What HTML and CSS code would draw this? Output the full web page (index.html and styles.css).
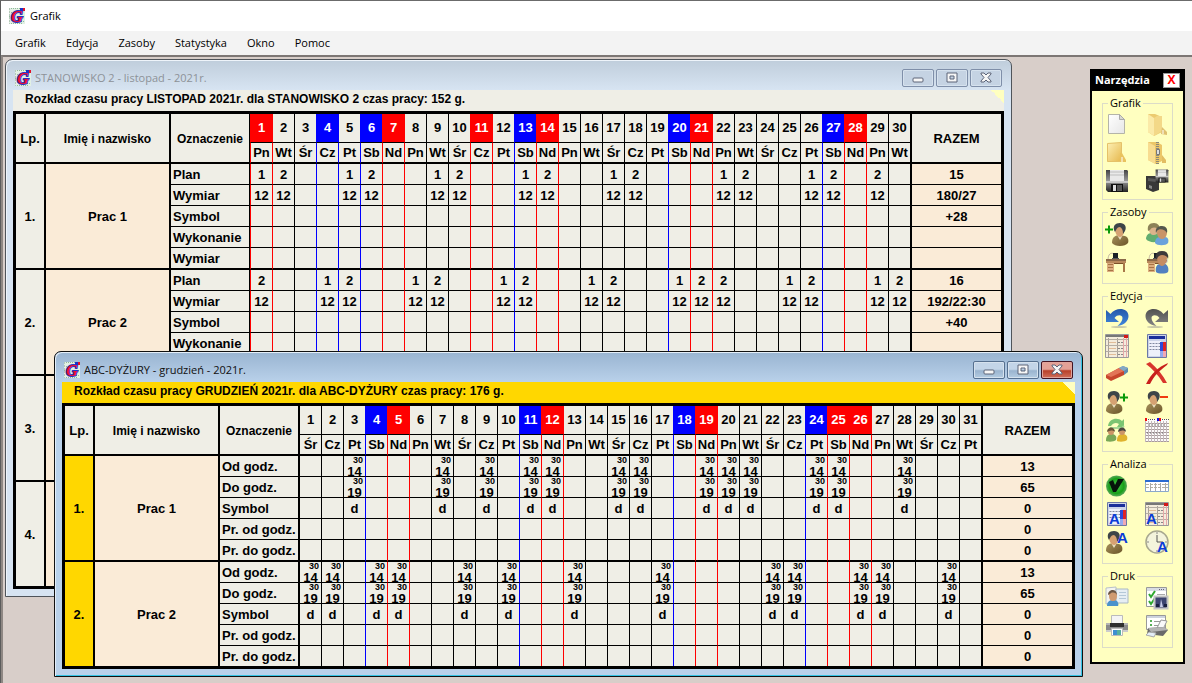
FILE: index.html
```html
<!DOCTYPE html>
<html lang="pl">
<head>
<meta charset="utf-8">
<title>Grafik</title>
<link rel="stylesheet" href="styles.css">
</head>
<body>
<svg class="defs" aria-hidden="true">
  <defs>
    <linearGradient id="gFolder" x1="0" y1="0" x2="1" y2="1"><stop offset="0" stop-color="#fdf0b4"/><stop offset="1" stop-color="#e6b84e"/></linearGradient>
    <linearGradient id="gPaper" x1="0" y1="0" x2="1" y2="1"><stop offset="0" stop-color="#ffffff"/><stop offset="1" stop-color="#e6e6e6"/></linearGradient>
    <linearGradient id="gMetal" x1="0" y1="0" x2="0" y2="1"><stop offset="0" stop-color="#444"/><stop offset=".5" stop-color="#999"/><stop offset="1" stop-color="#222"/></linearGradient>
    <linearGradient id="gBlue" x1="0" y1="0" x2="0" y2="1"><stop offset="0" stop-color="#2456a8"/><stop offset="1" stop-color="#4288dc"/></linearGradient>
    <linearGradient id="gGrey" x1="0" y1="0" x2="0" y2="1"><stop offset="0" stop-color="#505050"/><stop offset="1" stop-color="#858585"/></linearGradient>
    <linearGradient id="gSuit" x1="0" y1="0" x2="1" y2="1"><stop offset="0" stop-color="#a8925c"/><stop offset="1" stop-color="#6a5428"/></linearGradient>
    <radialGradient id="gOk"><stop offset="0" stop-color="#4fd04f"/><stop offset=".7" stop-color="#18a018"/><stop offset="1" stop-color="#5aa85a"/></radialGradient>
  </defs>
  <symbol id="logo" viewBox="0 0 16 16">
    <rect width="16" height="16" fill="#e2f0e4"/>
    <path d="M0 .5h12M0 4.500h4M0 8.500h4M0 12.500h4M12 13.500h4M2 15.500h12M14 8.500h2" stroke="#8fb89a" stroke-dasharray="1 1"/>
    <path d="M0.500 0v16" stroke="#b5c8b8" stroke-dasharray="2 1"/>
    <text x="2" y="14" class="logo-letter">G</text>
    <path d="M11 0h3v3h-3z" fill="#1733c8"/><path d="M14 0h2v3h-2z" fill="#e0102a"/>
  </symbol>
  <symbol id="man" viewBox="0 0 18 24">
    <path d="M1 21c0-5 2-7 6-8l7 1c3 1 4 4 3 7-3 4-13 4-16 0z" fill="url(#gSuit)"/>
    <path d="M6 13l3 5 3-5z" fill="#e8dcbc"/>
    <path d="M4 7c0 4 2 8 5 8s4-4 4-8-9-5-9 0z" fill="#d6a272"/>
    <path d="M3 8c-1-4 1-7 6-7 5 0 7 4 5 8l-2 3c0-4-1-6-3-7-2 0-3 1-4 3l-1 2z" fill="#3d4448"/>
  </symbol>
  <symbol id="duo" viewBox="0 0 24 24">
    <path d="M1 17c0-4 3-6 5-6h6c2 0 3 5 3 7-3 3-11 3-14-1z" fill="#62ae70"/>
    <path d="M4 7c0 4 2 6 5 6s4-3 4-6-9-4-9 0z" fill="#dcb48c"/>
    <path d="M3 9C2 4 4 1 9 1c4 0 6 3 6 7l-2-1c-3-2-6-2-8 1z" fill="#8d8258"/>
    <path d="M10 21c0-4 2-6 5-6h5c3 0 4 3 3 6-2 3-11 3-13 0z" fill="#6aa2dc"/>
    <path d="M12 10c0 4 2 7 5 7s5-3 5-7-10-5-10 0z" fill="#c99468"/>
    <path d="M11 11c-1-5 2-7 6-7s6 3 5 7c-2-4-8-5-10-2z" fill="#55584e"/>
  </symbol>
  <symbol id="desk" viewBox="0 0 24 24">
    <path d="M3 10c0-6 3-8 6-6" fill="none" stroke="#c4b8a0"/>
    <path d="M8 3h5v5H8z" fill="#1a2026"/><path d="M7 8h7v1H7z" fill="#555"/>
    <path d="M1 10h20v3H1z" fill="#b98a5c"/><path d="M1 9h20v2H1z" fill="#8a6848"/>
    <path d="M2 13h7v9H2z" fill="#dcae80"/><path d="M3 14.500h5M3 17.500h5M3 20.500h5" stroke="#a87444"/>
    <path d="M18 13h2v9h-2z" fill="#a87848"/><path d="M9 13h9v1H9z" fill="#7c5028"/>
  </symbol>
  <symbol id="undo" viewBox="0 0 24 24">
    <ellipse cx="14" cy="21" rx="8" ry="1" fill="#c9c9a8"/>
    <path d="M1 4v12h13l-4.500-4c3-4 8-3 8 0 0 3-2 5-5 8 7-1 11-5 11-10 0-8-12-10-18-2z"/>
  </symbol>
  <symbol id="sheet" viewBox="0 0 24 24">
    <path d="M.5.5h23v23H.5z" fill="#f4ecdc" stroke="#999"/>
    <path d="M1 1h18v2H1z" fill="#777"/><path d="M19 1h4v3h-4z" fill="#d41818"/>
    <path d="M12.500 4v19M3.500 4v19" stroke="#a8a098"/>
    <path d="M1 5.500h22M1 11.500h22M1 17.500h22" stroke="#b5aea4"/>
    <path d="M13 8.500h5M13 14.500h5M13 20.500h5" stroke="#888" stroke-dasharray="2 1"/>
    <path d="M4 8.500h7M4 14.500h7M4 20.500h7" stroke="#e2bd98"/>
    <path d="M18.500 4v19M21.500 4v19" stroke="#e6a8a8"/>
  </symbol>
  <symbol id="month" viewBox="0 0 24 24">
    <path d="M2.500.5h19v23h-19z" fill="#ccd4e8" stroke="#6c78a4"/>
    <path d="M4 2h16v3H4z" fill="#1a2f9a"/>
    <path d="M4 7h12v15H4z" fill="#eef0fa"/>
    <path d="M4.500 9.500h11M4.500 12.500h11M4.500 15.500h11" stroke="#8088a0" stroke-dasharray="2 1"/>
    <path d="M15 8h3v9h-3z" fill="#2d49d8"/><path d="M18 8h3v9h-3z" fill="#e02424"/>
    <path d="M15 17h3v6h-3z" fill="#94aaf0"/><path d="M18 17h3v6h-3z" fill="#f0a8b4"/>
  </symbol>
  <symbol id="floppy" viewBox="0 0 24 24">
    <path d="M1 1h21l1 1v21H3l-2-2z" fill="url(#gMetal)"/><path d="M5 1h14v11H5z" fill="#e9e9e9"/>
    <path d="M5 3h14M5 6h14" stroke="#bdbdbd"/><path d="M1 12h22v2H1z" fill="#eee" opacity=".6"/>
    <path d="M6 15h12v8H6z" fill="#111"/><path d="M8 16h3v6H8z" fill="#ddd"/><path d="M12 16h5v6h-5z" fill="#555"/>
  </symbol>
</svg>

<div class="app">
  <header class="app-title">
    <svg class="logo" aria-hidden="true"><use href="#logo"/></svg>
    <span>Grafik</span>
  </header>
  <nav class="menu">
    <button type="button">Grafik</button>
    <button type="button">Edycja</button>
    <button type="button">Zasoby</button>
    <button type="button">Statystyka</button>
    <button type="button">Okno</button>
    <button type="button">Pomoc</button>
  </nav>

  <main class="workspace">
    <section class="window window-november">
      <div class="window-bar">
        <svg class="logo" aria-hidden="true"><use href="#logo"/></svg>
        <span class="window-name">STANOWISKO 2 - listopad - 2021r.</span>
        <div class="window-buttons">
          <button type="button" aria-label="Minimalizuj"><svg viewBox="0 0 12 12"><rect x="1" y="6" width="10" height="4" rx="1"/></svg></button>
          <button type="button" aria-label="Maksymalizuj"><svg viewBox="0 0 12 12"><path fill-rule="evenodd" d="M1 1h10v9H1zM4 4v3h4V4z"/></svg></button>
          <button type="button" aria-label="Zamknij"><svg viewBox="0 0 12 12"><path d="M1 1h3l2 2 2-2h3v1L8 5.500 11 9v1H8L6 8l-2 2H1V9l3-3.500L1 2z"/></svg></button>
        </div>
      </div>
      <h2 class="caption">Rozkład czasu pracy LISTOPAD 2021r. dla STANOWISKO 2 czas pracy: 152 g.</h2>
      <table class="schedule" id="november"></table>
    </section>

    <section class="window window-december active">
      <div class="window-bar">
        <svg class="logo" aria-hidden="true"><use href="#logo"/></svg>
        <span class="window-name">ABC-DYŻURY - grudzień - 2021r.</span>
        <div class="window-buttons">
          <button type="button" aria-label="Minimalizuj"><svg viewBox="0 0 12 12"><rect x="1" y="6" width="10" height="4" rx="1"/></svg></button>
          <button type="button" aria-label="Maksymalizuj"><svg viewBox="0 0 12 12"><path fill-rule="evenodd" d="M1 1h10v9H1zM4 4v3h4V4z"/></svg></button>
          <button type="button" class="close" aria-label="Zamknij"><svg viewBox="0 0 12 12"><path d="M1 1h3l2 2 2-2h3v1L8 5.500 11 9v1H8L6 8l-2 2H1V9l3-3.500L1 2z"/></svg></button>
        </div>
      </div>
      <h2 class="caption">Rozkład czasu pracy GRUDZIEŃ 2021r. dla ABC-DYŻURY czas pracy: 176 g.</h2>
      <table class="schedule" id="december"></table>
    </section>

    <aside class="toolbox">
      <div class="toolbox-bar">
        <span>Narzędzia</span>
        <button type="button" aria-label="Zamknij narzędzia">X</button>
      </div>
      <div class="toolbox-body">
        <fieldset class="compact">
          <legend>Grafik</legend>
          <button type="button" aria-label="Nowy"><svg viewBox="0 0 24 24"><path d="M3.500 1.500h11l5 5v14h-16z" fill="url(#gPaper)" stroke="#b4b4a8"/><path d="M14.500 1.500v5h5z" fill="#d8d8d0" stroke="#aaa"/></svg></button>
          <button type="button" aria-label="Otwórz"><svg viewBox="0 0 24 24"><path d="M3 1h7l7 3v15l-8 4-6-4z" fill="#eccb70"/><path d="M3 1l6 4v18l-6-4z" fill="#fbeaa8"/><path d="M9 5l3-2h5v15l-8 5z" fill="#f3d888"/><path d="M17 14l5 5v3l-6-1z" fill="#dfc070"/><path d="M18 17v4" stroke="#fff"/></svg></button>
          <button type="button" aria-label="Zamknij grafik"><svg viewBox="0 0 24 24"><path d="M2.500 2.500l14-1v19h-14z" fill="url(#gFolder)" stroke="#e5c169"/><path d="M15 12h2l4 7v2h-6z" fill="#e9c25e"/><path d="M17 16v5" stroke="#fff"/></svg></button>
          <button type="button" aria-label="Archiwum"><svg viewBox="0 0 24 24"><path d="M3 1h9l5 3v16l-6 3-8-4z" fill="#ecc668"/><path d="M3 1l7 4v18l-7-4z" fill="#f8dc90"/><path d="M12.500 1v7M12.500 14v9" stroke="#8c8878" stroke-width="3" stroke-dasharray="1 1"/><path d="M11.500 8.500h3v5h-3z" fill="#ddd" stroke="#777"/><path d="M17 14l4 5v3h-4z" fill="#e2bd62"/></svg></button>
          <button type="button" aria-label="Zapisz"><svg viewBox="0 0 24 24"><use href="#floppy"/></svg></button>
          <button type="button" aria-label="Zapisz jako"><svg viewBox="0 0 24 24"><path d="M1 7h10l3 3v11l-6 2-7-3z" fill="#383838"/><path d="M3 9l8 1v3l-8-1z" fill="#5a5a5a"/><path d="M4 16l3 1v3l-3-1z" fill="#888"/><use href="#floppy" x="10" y="0" width="14" height="14"/></svg></button>
        </fieldset>
        <fieldset>
          <legend>Zasoby</legend>
          <button type="button" aria-label="Dodaj pracownika"><svg viewBox="0 0 24 24"><use href="#man" x="6" y="0" width="18" height="24"/><path d="M0 7.500h8M4 3.500v8" stroke="#0a9a0a" stroke-width="2"/></svg></button>
          <button type="button" aria-label="Pracownicy"><svg viewBox="0 0 24 24"><use href="#duo"/></svg></button>
          <button type="button" aria-label="Stanowisko"><svg viewBox="0 0 24 24"><use href="#desk"/></svg></button>
          <button type="button" aria-label="Obsada stanowiska"><svg viewBox="0 0 24 24"><use href="#desk" x="1"/><path d="M11 22c-1-5 1-8 4-8h5c3 1 4 5 3 8-2 2-10 2-12 0z" fill="#5280c0"/><path d="M12 7c0 5 2 9 5 9s5-4 5-9-10-5-10 0z" fill="#c48c62"/><path d="M11 9c-1-5 1-8 6-8s7 3 6 8c-1-3-3-4-6-4-2 0-4 1-5 4z" fill="#3d3a3a"/><path d="M22 9c1 2 0 4-2 5" fill="none" stroke="#ccc"/></svg></button>
        </fieldset>
        <fieldset>
          <legend>Edycja</legend>
          <button type="button" aria-label="Cofnij"><svg viewBox="0 0 24 24" fill="url(#gBlue)"><use href="#undo"/></svg></button>
          <button type="button" aria-label="Ponów"><svg viewBox="0 0 24 24" fill="url(#gGrey)"><g transform="matrix(-1 0 0 1 24 0)"><use href="#undo"/></g></svg></button>
          <button type="button" aria-label="Arkusz"><svg viewBox="0 0 24 24"><use href="#sheet"/></svg></button>
          <button type="button" aria-label="Miesiąc"><svg viewBox="0 0 24 24"><use href="#month"/></svg></button>
          <button type="button" aria-label="Wyczyść"><svg viewBox="0 0 24 24"><path d="M1 13l13-7 5 3v4L6 19l-5-3z" fill="#c8452c"/><path d="M1 13l13-7 5 3-13 6z" fill="#e27458"/><path d="M14 6l4-2 5 2v4l-4 3V9z" fill="#5f8cb0"/><path d="M14 6l4-2 5 2-4 3z" fill="#84a8c4"/></svg></button>
          <button type="button" aria-label="Usuń"><svg viewBox="0 0 24 24"><path d="M1 2l4-2c7 6 13 13 17 21h-4C13 13 8 7 1 2z" fill="#d8352c"/><path d="M23 1l-1 2C14 9 9 14 5 22H1C6 12 13 5 23 1z" fill="#c8201c"/></svg></button>
          <button type="button" aria-label="Dodaj osobę"><svg viewBox="0 0 24 24"><use href="#man" x="0" y="0" width="18" height="24"/><path d="M15 7.500h8M19 3.500v8" stroke="#0a9a0a" stroke-width="2"/></svg></button>
          <button type="button" aria-label="Usuń osobę"><svg viewBox="0 0 24 24"><use href="#man" x="0" y="0" width="18" height="24"/><path d="M15 7h8" stroke="#f03a10" stroke-width="2"/></svg></button>
          <button type="button" aria-label="Zamień osoby"><svg viewBox="0 0 24 24"><path d="M3 8c1-8 10-9 14-5l2-2v8h-7l2-3c-3-2-6-1-8 2z" fill="#7cc472"/><path d="M5 10h12l2-2" fill="none" stroke="#a7d896" stroke-width="2"/><path d="M1 23c0-4 1-6 4-7h3c3 1 4 3 3 6-2 2-8 2-10 1z" fill="#7aa858"/><circle cx="6" cy="14" r="3" fill="#cc9566"/><path d="M2 14c0-6 8-6 8 0-2-2-5-2-8 0z" fill="#6a5438"/><path d="M12 23c0-4 1-6 4-7h3c3 1 4 3 3 6-2 2-8 2-10 1z" fill="#e0b32d"/><circle cx="17" cy="14" r="3" fill="#cc9566"/><path d="M13 14c0-6 8-6 8 0-2-2-5-2-8 0z" fill="#4c4640"/></svg></button>
          <button type="button" aria-label="Siatka"><svg viewBox="0 0 24 24"><path d="M0 1h24v23H0z" fill="#fcfafa"/><path d="M0 5.500h24M0 8.500h24M0 11.500h24M0 14.500h24M0 17.500h24M0 20.500h24M0 23.500h24" stroke="#a89c9c"/><path d="M.5 3v21M3.500 3v21M6.500 3v21M9.500 3v21M12.500 3v21M15.500 3v21M18.500 3v21M21.500 3v21" stroke="#c4b8bc"/><path d="M4 7h16M2 15h18" stroke="#666" stroke-dasharray="1 2"/><path d="M0 0h2v3H0zM14 0h2v3h-2z" fill="#e11"/><path d="M12 0h2v3h-2z" fill="#11e"/><path d="M3 1.500h8M17 1.500h7" stroke="#555" stroke-dasharray="1 1"/></svg></button>
        </fieldset>
        <fieldset>
          <legend>Analiza</legend>
          <button type="button" aria-label="Sprawdź"><svg viewBox="0 0 24 24"><circle cx="11.500" cy="12" r="10.500" fill="url(#gOk)"/><path d="M4 8l4-2 2 5 3-6h6l-8 13H8z" fill="#06140a"/></svg></button>
          <button type="button" aria-label="Tabela"><svg viewBox="0 0 24 24"><path d="M.5 6.500h23v11H.5z" fill="#fff" stroke="#8aa8cc"/><path d="M0 6h24v2H0z" fill="#2a6ad0"/><path d="M1 10.500h22M1 13.500h22" stroke="#b4b0a0" stroke-dasharray="3 1"/><path d="M5.500 9v8M10.500 9v8M15.500 9v8M20.500 9v8" stroke="#aaa"/></svg></button>
          <button type="button" aria-label="Analiza miesiąca"><svg viewBox="0 0 24 24"><use href="#month"/><text x="4" y="22" class="glyph-a">A</text></svg></button>
          <button type="button" aria-label="Analiza arkusza"><svg viewBox="0 0 24 24"><use href="#sheet"/><text x="1" y="22" class="glyph-a">A</text></svg></button>
          <button type="button" aria-label="Analiza osoby"><svg viewBox="0 0 24 24"><use href="#man" x="0" y="0" width="18" height="24"/><text x="12" y="13" class="glyph-a">A</text></svg></button>
          <button type="button" aria-label="Analiza czasu"><svg viewBox="0 0 24 24"><circle cx="12" cy="12" r="11" fill="#f4f4dc" stroke="#a8a890" stroke-width="1.500"/><path d="M12 5v7h6" fill="none" stroke="#555"/><path d="M12 2v2M12 20v2M2 12h2M20 12h2" stroke="#888"/><text x="12" y="22" class="glyph-a">A</text></svg></button>
        </fieldset>
        <fieldset>
          <legend>Druk</legend>
          <button type="button" aria-label="Drukuj kartę"><svg viewBox="0 0 24 24"><path d="M1 2l10-1v15L1 18z" fill="#f4f4f0" stroke="#b8c0c8"/><path d="M11 3h12v14H11z" fill="#e6eef4" stroke="#aab8c4"/><path d="M14 6.500h7M14 9.500h7M14 12.500h7" stroke="#b4c8d8"/><path d="M2 20c0-4 2-5 4-6h4c3 1 4 4 3 6z" fill="#4a92cc"/><path d="M4 9c0 4 1 6 4 6s4-2 4-6-8-4-8 0z" fill="#cf9a70"/><path d="M3 9c0-6 9-7 9 0-2-3-5-3-7-1z" fill="#6c5644"/></svg></button>
          <button type="button" aria-label="Drukuj listę"><svg viewBox="0 0 24 24"><path d="M1.500 1.500h20v19h-20z" fill="#fff" stroke="#999"/><path d="M2 2h19v3H2z" fill="#d8dce4"/><path d="M14 3.500h6" stroke="#667" stroke-dasharray="1 1"/><path d="M4 8l2 3 4-6M4 15l2 3 4-6" fill="none" stroke="#2fa82f" stroke-width="2"/><path d="M12 8.500h8" stroke="#aaa"/><path d="M9.500 10.500h13v12h-13z" fill="#3c4470" stroke="#c4c4c4" stroke-width="2"/><path d="M11 18h3v3h-3zM19 18h3v3h-3z" fill="#1a2040"/><path d="M15 21l1-8 2 8z" fill="#c8cce8"/></svg></button>
          <button type="button" aria-label="Drukuj"><svg viewBox="0 0 24 24"><path d="M6.500 1.500h11v8h-11z" fill="#f4f4f4" stroke="#bbb"/><path d="M1 9h22v9H1z" fill="#8a8a8a"/><path d="M1 9h22v2H1z" fill="#b4b4b4"/><path d="M5 9h14v4H5z" fill="#2e2e2e"/><path d="M1 16h22v2H1z" fill="#ccc"/><path d="M6.500 14.500h11v7h-11z" fill="#fff" stroke="#bbb"/><path d="M8 16h4v5H8z" fill="#3d8fd0"/><path d="M12 16h4v5h-4z" fill="#55b0a0"/></svg></button>
          <button type="button" aria-label="Drukuj zestawienie"><svg viewBox="0 0 24 24"><path d="M1.500 1.500h19v14h-19z" fill="#fff" stroke="#999"/><path d="M2 2h18v2H2z" fill="#cdd3dd"/><path d="M5 6h2v2H5zM5 10h2v2H5z" fill="#58b058"/><path d="M9 7.500h7M9 11.500h4" stroke="#999"/><path d="M16 6l6 1-4 8-6-1z" fill="#fafafa" stroke="#999"/><path d="M3 14l16-1 4 3-5 6-16-2z" fill="#6a6a6a"/><path d="M3 14l16-1 4 3-17 2z" fill="#b4b4b4"/><path d="M4 18l7 1-2 4-8-2z" fill="#e4eef8" stroke="#aaa"/></svg></button>
        </fieldset>
      </div>
    </aside>
  </main>
</div>
<script src="schedule.js"></script>
</body>
</html>
```

FILE: styles.css
```css
* { box-sizing: border-box; }

body {
  margin: 0;
  font: 11px/16px "Open Sans", "Noto Sans", sans-serif;
  color: #000;
  background: #d8cec9;
}

button { font: inherit; color: inherit; margin: 0; padding: 0; border: 0; background: none; }

.defs { position: absolute; width: 0; height: 0; }

.logo { width: 16px; height: 16px; flex: none; }

.logo-letter {
  font: italic bold 16px "Liberation Serif", serif;
  fill: #ee1030;
  stroke: #2a34c4;
  stroke-width: 2px;
  paint-order: stroke;
}

.glyph-a { font: bold 15px "Liberation Sans", sans-serif; fill: #0a3cd8; }

.app {
  display: flex;
  flex-direction: column;
  min-height: 100vh;
  border-top: 1px solid #6b6b6b;
  border-left: 1px solid #5c5c5c;
}

.app-title {
  display: flex;
  align-items: center;
  gap: 5px;
  height: 30px;
  padding-left: 8px;
  background: #fff;
}

.menu {
  display: flex;
  gap: 20px;
  height: 24px;
  padding-left: 14px;
  background: #f3f3f3;
}

.workspace {
  position: relative;
  flex: 1;
  overflow: hidden;
  border-top: 2px solid #7c7674;
  border-left: 2px solid #8e8783;
  background: #d8cec9;
}

/* Document windows */

.window {
  position: absolute;
  padding: 0 7px 7px;
  border: 1px solid #4f545a;
  border-radius: 7px 7px 0 0;
  background: #d7e4f2 linear-gradient(#bfcddb, #d7e4f2) 0 0 / 100% 30px no-repeat;
  box-shadow: inset 1px 1px #eef4fa;
}

.window-november { left: 2px; top: 2px; }
.window-december { left: 51px; top: 294px; }

.window.active {
  border-color: #111;
  background: #b9d1ea linear-gradient(#99b4d1, #b9d1ea) 0 0 / 100% 30px no-repeat;
  box-shadow: inset 1px 1px #e4eef8, inset -1px -1px #35c4e4;
}

.window-bar {
  display: flex;
  align-items: center;
  gap: 4px;
  height: 30px;
  padding: 6px 2px 0;
  color: #8d9298;
}

.active .window-bar { color: #101010; }

.window-buttons { display: flex; gap: 2px; margin-left: auto; }

.window-buttons button {
  display: flex;
  align-items: center;
  justify-content: center;
  width: 32px;
  height: 18px;
  border: 1px solid #7f8fa9;
  border-radius: 2px;
  background: #c5d3e3;
  box-shadow: inset 0 0 0 1px #d6e2ee;
}

.active .window-buttons button {
  border-color: #56708f;
  background: linear-gradient(#c3d5e8 45%, #9ab4cf 55%, #b4cce2);
}

.active .window-buttons .close {
  border-color: #431422;
  background: linear-gradient(#e3a196 45%, #b8402a 55%, #d0705c);
  box-shadow: inset 0 0 0 1px #e0a49c;
}

.window-buttons svg { width: 12px; height: 12px; fill: #f6f6f6; stroke: #5c6478; }

.caption {
  height: 21px;
  margin: 0;
  padding-left: 12px;
  font: bold 12px/19px "Liberation Sans", sans-serif;
  background: #efeee6 linear-gradient(to top right, transparent 50%, #ffffc0 50%) right top / 13px 13px no-repeat;
}

.active .caption { background-color: #ffd700; }

/* Schedule tables */

.schedule {
  border: 3px solid #000;
  border-spacing: 0;
  font: bold 13px/18px "Liberation Sans", sans-serif;
  text-align: center;
  white-space: nowrap;
  background: #efeee6;
}

.schedule th,
.schedule td {
  box-sizing: content-box;
  height: 18px;
  padding: 2px 0 0;
  border: 0 solid #000;
  border-bottom-width: 1px;
}

.col-number { width: 30px; }
.col-name { width: 125px; }
.col-label { width: 79px; }
.col-day { width: 22px; }
.col-total { width: 91px; }

.schedule .number,
.schedule .name { border-right-width: 2px; }
.schedule .number,
.schedule .name,
.schedule .corner { border-bottom-width: 2px; }
.schedule .title { font-size: 12px; }
.schedule .name.person { background: #faebd7; }
.active .schedule .number.person { background: #ffd700; }

.schedule .label { border-right-width: 1px; }
.schedule .label.row { padding-left: 2px; text-align: left; }

.schedule .total { border-left-width: 2px; }
.schedule .total.sum { background: #faebd7; }

.schedule .day { border-left-width: 1px; }
.schedule .date { height: 28px; padding-top: 0; }
.schedule .weekday { height: 19px; padding-top: 0; line-height: 19px; border-bottom-width: 2px; }
.schedule .timed { height: 20px; padding-top: 0; }

.schedule .blue { border-left-color: #00f; }
.schedule .red { border-left-color: #f00; }
.schedule .date.fill-blue { background: #00f; color: #fff; }
.schedule .date.fill-red { background: #f00; color: #fff; }

.schedule .block-end > * { border-bottom-width: 2px; }
.schedule .table-end > *,
.schedule .table-last { border-bottom-width: 0; }

.time { display: block; height: 20px; }
.time sup { display: block; padding-right: 2px; font-size: 9px; line-height: 8px; text-align: right; }
.time b { display: block; line-height: 15px; }

/* Tool palette */

.toolbox {
  position: absolute;
  top: 12px;
  right: 7px;
  width: 95px;
  border: 2px solid #000;
  border-top: 0;
  background: #ffffc0;
}

.toolbox-bar {
  display: flex;
  align-items: center;
  justify-content: space-between;
  height: 22px;
  padding: 0 3px;
  font-weight: bold;
  color: #fff;
  background: #000;
}

.toolbox-bar button {
  width: 17px;
  height: 15px;
  border: 1px solid #999;
  font-size: 12px;
  font-weight: bold;
  line-height: 12px;
  color: #f00;
  background: #fff;
}

.toolbox-body {
  display: flex;
  flex-direction: column;
  gap: 4px;
  padding: 4px 10px 14px;
}

fieldset {
  display: grid;
  grid-template-columns: 24px 24px;
  gap: 4px 16px;
  min-width: 0;
  margin: 0;
  padding: 2px 2px 9px;
  border: 1px solid #dcdcc8;
}

fieldset.compact { padding-bottom: 6px; }

legend { margin-left: 3px; padding: 0 2px; }

fieldset button { width: 24px; height: 24px; }
fieldset svg { display: block; width: 24px; height: 24px; }
```

FILE: schedule.js
```js
const WEEK = ["Pn", "Wt", "Śr", "Cz", "Pt", "Sb", "Nd"];

const fill = (days, value) => Object.fromEntries(days.map((d) => [d, value]));

const plan = (ones, twos) => ({ ...fill(ones, "1"), ...fill(twos, "2") });

const shift = (ones, twos, totals) => [
  ["Plan", plan(ones, twos), totals[0]],
  ["Wymiar", fill([...ones, ...twos], "12"), totals[1]],
  ["Symbol", {}, totals[2]],
  ["Wykonanie", {}, ""],
  ["Wymiar", {}, ""],
];

const time = (hour, minutes) => `<span class="time"><sup>${minutes}</sup><b>${hour}</b></span>`;

const duty = (days) => [
  ["Od godz.", fill(days, time(14, 30)), "13"],
  ["Do godz.", fill(days, time(19, 30)), "65"],
  ["Symbol", fill(days, "d"), "0"],
  ["Pr. od godz.", {}, "0"],
  ["Pr. do godz.", {}, "0"],
];

const blank = () => Array.from({ length: 5 }, () => ["", {}, ""]);

function render(id, { days, start, blue, red, people }) {
  const list = Array.from({ length: days }, (_, i) => i + 1);
  const kind = (d) => (blue.includes(d) ? "blue" : red.includes(d) ? "red" : "");
  const edge = (d) => kind(d) || kind(d - 1);

  const cols =
    '<colgroup><col class="col-number"><col class="col-name"><col class="col-label">' +
    `<col class="col-day" span="${days}"><col class="col-total"></colgroup>`;

  const dates = list
    .map((d) => `<th class="day date ${edge(d)} ${kind(d) && "fill-" + kind(d)}">${d}</th>`)
    .join("");
  const weekdays = list
    .map((d) => `<th class="day weekday ${edge(d)}">${WEEK[(start + d - 1) % 7]}</th>`)
    .join("");

  const head =
    '<thead><tr><th class="number" rowspan="2">Lp.</th><th class="name title" rowspan="2">Imię i nazwisko</th>' +
    `<th class="label corner title" rowspan="2">Oznaczenie</th>${dates}` +
    `<th class="total corner" rowspan="2">RAZEM</th></tr><tr>${weekdays}</tr></thead>`;

  const body = people
    .map(([name, rows], p) => {
      const lastPerson = p === people.length - 1;
      return rows
        .map(([label, values, sum], r) => {
          const lastRow = r === rows.length - 1;
          const rowClass = lastRow ? (lastPerson ? "table-end" : "block-end") : "";
          const end = lastPerson ? "table-last" : "";
          const lead = r
            ? ""
            : `<th class="number person ${end}" rowspan="5">${p + 1}.</th>` +
              `<th class="name person ${end}" rowspan="5">${name}</th>`;
          const cells = list
            .map((d) => {
              const value = values[d] || "";
              const timed = value.startsWith("<") ? "timed" : "";
              return `<td class="day ${edge(d)} ${timed}">${value}</td>`;
            })
            .join("");
          return `<tr class="${rowClass}">${lead}<th class="label row">${label}</th>${cells}<td class="total sum">${sum}</td></tr>`;
        })
        .join("");
    })
    .join("");

  document.getElementById(id).innerHTML = `${cols}${head}<tbody>${body}</tbody>`;
}

render("november", {
  days: 30,
  start: 0,
  blue: [4, 6, 13, 20, 27],
  red: [1, 7, 11, 14, 21, 28],
  people: [
    ["Prac 1", shift([1, 5, 9, 13, 17, 22, 26], [2, 6, 10, 14, 18, 23, 27, 29], ["15", "180/27", "+28"])],
    ["Prac 2", shift([4, 8, 12, 16, 20, 25, 29], [1, 5, 9, 13, 17, 21, 22, 26, 30], ["16", "192/22:30", "+40"])],
    ["", blank()],
    ["", blank()],
  ],
});

render("december", {
  days: 31,
  start: 2,
  blue: [4, 11, 18, 24],
  red: [5, 12, 19, 25, 26],
  people: [
    ["Prac 1", duty([3, 7, 9, 11, 12, 15, 16, 19, 20, 21, 24, 25, 28])],
    ["Prac 2", duty([1, 2, 4, 5, 8, 10, 13, 17, 22, 23, 26, 27, 30])],
  ],
});
```
